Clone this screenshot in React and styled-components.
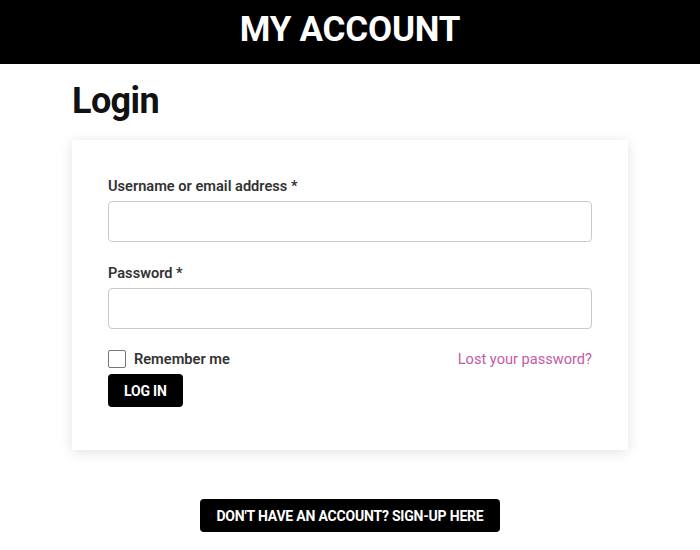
import React from 'react';
import styled, { createGlobalStyle } from 'styled-components';

const GlobalStyle = createGlobalStyle`
	html, body {
		margin: 0;
		padding: 0;
		background: #fff;
		font-family: Roboto, "Liberation Sans", Arial, sans-serif;
	}
	* { box-sizing: border-box; }
`;

const colors = {
	black: '#000',
	text: '#333',
	border: '#c9c9c9',
	link: '#c35ba6',
};

export default function App() {
	return (
		<Page>
			<GlobalStyle />
			<Banner>
				<BannerTitle>MY ACCOUNT</BannerTitle>
			</Banner>
			<Main>
				<Heading>Login</Heading>
				<Card>
					<Field>
						<Label htmlFor="username">Username or email address *</Label>
						<Input id="username" type="text" />
					</Field>
					<Field>
						<Label htmlFor="password">Password *</Label>
						<Input id="password" type="password" />
					</Field>
					<OptionsRow>
						<Remember>
							<Checkbox type="checkbox" />
							<span>Remember me</span>
						</Remember>
						<LostLink href="#">Lost your password?</LostLink>
					</OptionsRow>
					<DarkButton type="button">Log in</DarkButton>
				</Card>
				<SignupRow>
					<DarkButton type="button">
						Don't have an account? Sign-up here
					</DarkButton>
				</SignupRow>
			</Main>
		</Page>
	);
}

const Page = styled.div`
	width: 700px;
	min-height: 550px;
`;

const Banner = styled.header`
	height: 64px;
	background: ${colors.black};
	display: flex;
	align-items: center;
	justify-content: center;
`;

const BannerTitle = styled.h1`
	margin: 0;
	color: #fff;
	font-size: 35px;
	font-weight: 700;
	letter-spacing: -0.2px;
	padding-bottom: 6px;
`;

const Main = styled.main`
	padding: 18px 72px 0;
`;

const Heading = styled.h2`
	margin: 0 0 20px;
	font-size: 36px;
	font-weight: 700;
	letter-spacing: -0.6px;
	line-height: 38px;
	color: #111;
`;

const Card = styled.section`
	background: #fff;
	box-shadow: 0 2px 12px rgba(0, 0, 0, 0.12);
	padding: 36px 36px 43px;
	display: flex;
	flex-direction: column;
	align-items: flex-start;
`;

const Field = styled.div`
	width: 100%;
	display: flex;
	flex-direction: column;
	margin-bottom: 21px;
`;

const Label = styled.label`
	font-size: 14.6px;
	font-weight: 600;
	color: ${colors.text};
	line-height: 20px;
	margin-bottom: 5px;
`;

const Input = styled.input`
	height: 41px;
	width: 100%;
	border: 1px solid ${colors.border};
	border-radius: 4px;
	padding: 0 12px;
	font-size: 15px;
`;

const OptionsRow = styled.div`
	width: 100%;
	display: flex;
	justify-content: space-between;
	align-items: center;
	margin-top: 0;
	margin-bottom: 6px;
`;

const Remember = styled.label`
	display: flex;
	align-items: center;
	gap: 8px;
	font-size: 14.6px;
	font-weight: 600;
	color: ${colors.text};
`;

const Checkbox = styled.input`
	appearance: none;
	margin: 0;
	width: 18px;
	height: 18px;
	border: 1px solid #777;
	border-radius: 2px;
	background: #fff;
`;

const LostLink = styled.a`
	color: ${colors.link};
	font-size: 14.6px;
	text-decoration: none;
`;

const DarkButton = styled.button`
	background: ${colors.black};
	color: #fff;
	border: none;
	border-radius: 4px;
	height: 33px;
	padding: 0 16px;
	font-family: inherit;
	font-size: 14px;
	font-weight: 700;
	text-transform: uppercase;
	letter-spacing: -0.2px;
	cursor: pointer;
`;

const SignupRow = styled.div`
	display: flex;
	justify-content: center;
	margin-top: 49px;
`;
